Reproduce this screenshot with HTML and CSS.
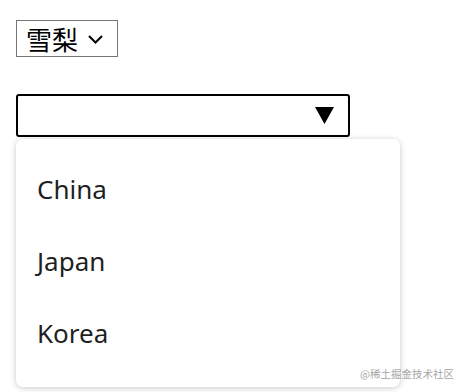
FILE: index.html
```html
<!DOCTYPE html>
<html lang="zh">
<head>
<meta charset="utf-8">
<link rel="stylesheet" href="styles.css">
</head>
<body>
<div class="page">
  <div class="native-select">
    <span class="native-value">雪梨</span>
    <svg class="chev" width="15" height="9" viewBox="0 0 15 9"><path d="M1 1 L7.5 7.5 L14 1" fill="none" stroke="#000" stroke-width="2"/></svg>
  </div>
  <div class="combo">
    <div class="combo-box">
      <svg class="tri" width="19" height="17" viewBox="0 0 19 17"><path d="M0 0 H19 L9.5 17 Z" fill="#000"/></svg>
    </div>
    <ul class="menu">
      <li class="item">China</li>
      <li class="item">Japan</li>
      <li class="item">Korea</li>
    </ul>
  </div>
</div>
<div class="watermark">@稀土掘金技术社区</div>
</body>
</html>
```
FILE: styles.css
```css
html, body {
  margin: 0;
  padding: 0;
  background: #fff;
}
body {
  width: 458px;
  height: 392px;
  overflow: hidden;
  position: relative;
  font-family: "Noto Sans", "Noto Sans CJK SC", sans-serif;
}
.page {
  padding: 20px 16px 0;
  display: flex;
  flex-direction: column;
  align-items: flex-start;
}
.native-select {
  box-sizing: border-box;
  width: 102px;
  height: 37px;
  border: 1px solid #767676;
  display: flex;
  align-items: center;
  padding-left: 9px;
  gap: 10px;
}
.native-value {
  font-family: "Noto Sans CJK SC", sans-serif;
  font-size: 26px;
  line-height: 1;
  color: #000;
}
.chev { display: block; margin-top: 1px; }
.combo {
  margin-top: 37px;
  display: flex;
  flex-direction: column;
}
.combo-box {
  box-sizing: border-box;
  width: 334px;
  height: 43px;
  border: 2px solid #000;
  border-radius: 3px;
  display: flex;
  align-items: center;
  justify-content: flex-end;
  padding-right: 14px;
}
.tri { display: block; }
.menu {
  list-style: none;
  margin: 2px 0 0;
  padding: 14px 0 18px;
  width: 384px;
  box-sizing: border-box;
  background: #fff;
  border-radius: 7px;
  box-shadow: 0 1px 6px rgba(0,0,0,0.22);
}
.item {
  height: 72px;
  display: flex;
  align-items: center;
  padding-left: 21px;
  font-size: 26px;
  color: #1f1f1f;
}
.watermark {
  position: absolute;
  left: 360px;
  top: 366px;
  font-family: "Noto Sans CJK SC", sans-serif;
  font-size: 10.5px;
  color: #a6a6a6;
  white-space: nowrap;
}
```
